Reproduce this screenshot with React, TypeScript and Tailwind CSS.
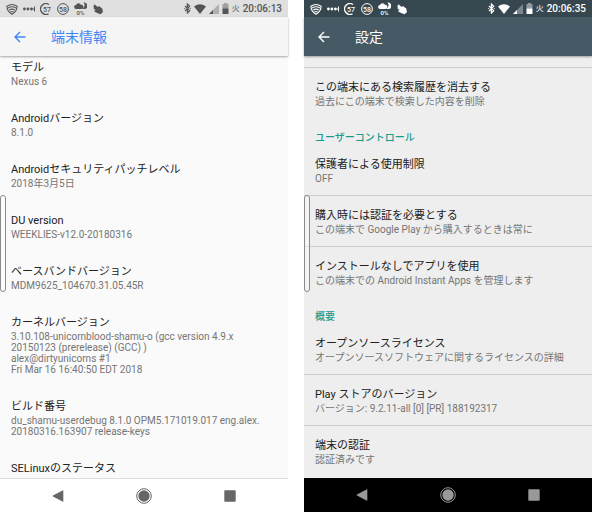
import React, { type ReactNode } from "react";

type Tone = { bar: string; toolbar: string; nav: string };

function WifiShieldIcon() {
  return (
    <svg className="h-3 w-3 shrink-0" viewBox="0 0 12 12" fill="none" stroke="currentColor" strokeWidth="1.1" aria-hidden="true">
      <path d="M.9 3.3Q6-.3 11.1 3.3C11.1 7 8.8 9.6 6 11.3 3.2 9.6.9 7 .9 3.3Z" />
      <path d="M2.2 5Q6 2.4 9.8 5M3.2 7.1Q6 5.2 8.8 7.1M4.4 9Q6 7.9 7.6 9" />
    </svg>
  );
}

function DotsIcon() {
  return (
    <svg className="h-3 w-3 shrink-0" viewBox="0 0 12 12" fill="currentColor" aria-hidden="true">
      <circle cx="1.4" cy="6" r="1.4" />
      <circle cx="4.9" cy="6" r="1.4" />
      <circle cx="8.4" cy="6" r="1.4" />
      <path d="M9.500 5.500h1.500v1H9.500zM11 3.500h1v5h-1z" />
    </svg>
  );
}

function GaugeIcon({ value, partial }: { value: string; partial?: boolean }) {
  return (
    <svg className="h-3 w-3 shrink-0" viewBox="0 0 12 12" aria-hidden="true">
      {partial ? (
        <path d="M9 1.500A5.400 5.400 0 1 0 8.500 10.800" fill="none" stroke="currentColor" strokeWidth="1.300" />
      ) : (
        <circle cx="6" cy="6" r="5.400" fill="none" stroke="currentColor" strokeWidth="1" />
      )}
      <text x={partial ? "7" : "6"} y="8.600" textAnchor="middle" fontSize="7" fontWeight="500" fill="currentColor" fontFamily="Roboto, sans-serif">
        {value}
      </text>
    </svg>
  );
}

function WeatherIcon() {
  return (
    <svg className="h-[14px] w-[13px] shrink-0" viewBox="0 0 13 14" fill="currentColor" aria-hidden="true">
      <path d="M2.200 7A2 2 0 0 1 2 3 2.700 2.700 0 0 1 7 2.800a2.100 2.100 0 0 1 .6 4.200Z" />
      <path d="M9.300.8A3.200 3.200 0 1 1 8.400 6.400 3.200 3.200 0 0 0 10.500 3.600 2.600 2.600 0 0 0 9.300.8Z" />
      <text x="6.500" y="13" textAnchor="middle" fontSize="6" fontWeight="500" fontFamily="Roboto, sans-serif">
        0%
      </text>
    </svg>
  );
}

function HandIcon() {
  return (
    <svg className="h-3 w-3 shrink-0" viewBox="0 0 12 12" fill="currentColor" aria-hidden="true">
      <path d="M2.400 1.200 5.800 4 6.900 3l3.300 2.600L11 9 8.600 11.200 5.600 10.300 2 8.300l.4-.9 1.300.2L1.300 5.100l.7-.7L1.200 2.900l.8-.4Z" />
    </svg>
  );
}

function BluetoothIcon() {
  return (
    <svg className="h-[11px] w-[7px] shrink-0" viewBox="0 0 7 11" fill="none" stroke="currentColor" strokeWidth="1.200" aria-hidden="true">
      <path d="M1 3 5.700 7.700 3.400 10V1l2.300 2.300L1 8" />
      <path d="M.3 5.500h.9M5.800 5.500h.9" />
    </svg>
  );
}

function WifiIcon() {
  return (
    <svg className="h-[10px] w-3 shrink-0" viewBox="0 0 12 10" fill="currentColor" aria-hidden="true">
      <path d="M0 2.500Q6-2 12 2.500L6 10Z" />
    </svg>
  );
}

function SignalIcon() {
  return (
    <svg className="h-[10px] w-[10px] shrink-0" viewBox="0 0 10 10" fill="currentColor" aria-hidden="true">
      <path d="M10 0v10H0Z" opacity=".35" />
      <path d="M4 6v4H0Z" />
    </svg>
  );
}

function BatteryIcon() {
  return (
    <svg className="h-[11px] w-[7px] shrink-0" viewBox="0 0 7 11" fill="currentColor" aria-hidden="true">
      <path d="M2 0h3v1h1.500v4.500H.5V1H2Z" opacity=".45" />
      <path d="M.5 5.500h6V11h-6Z" />
      <path d="M1.500 4.500h1v2h-1zM4.500 4.500h1v2h-1z" opacity=".6" />
    </svg>
  );
}

function StatusBar({ time, tone }: { time: string; tone: Tone }) {
  return (
    <div className={`flex h-[17px] shrink-0 items-center justify-between px-[6px] ${tone.bar}`}>
      <div className="flex items-center gap-[5px]">
        <WifiShieldIcon />
        <DotsIcon />
        <GaugeIcon value="57" partial />
        <GaugeIcon value="58" />
        <WeatherIcon />
        <HandIcon />
      </div>
      <div className="flex items-center gap-[3px]">
        <BluetoothIcon />
        <WifiIcon />
        <SignalIcon />
        <BatteryIcon />
        <span className="text-[8px] leading-4">火</span>
        <time className="text-[10px] leading-4 font-medium">{time}</time>
      </div>
    </div>
  );
}

function Toolbar({ title, tone }: { title: string; tone: Tone }) {
  return (
    <header className={`relative z-10 flex h-[39px] shrink-0 items-center gap-6 px-3 shadow-[0_1px_2px_rgba(0,0,0,0.35)] ${tone.toolbar}`}>
      <button type="button" aria-label="戻る" className="flex w-[15px] justify-center">
        <svg className="h-3 w-3" viewBox="0 0 12 12" fill="none" stroke="currentColor" strokeWidth="1.400" aria-hidden="true">
          <path d="M11.500 6H1.200M6 1 1 6l5 5" />
        </svg>
      </button>
      <h1 className="text-[14px] leading-5">{title}</h1>
    </header>
  );
}

function NavBar({ tone }: { tone: Tone }) {
  return (
    <nav className={`grid h-[34px] shrink-0 grid-cols-3 px-[5%] ${tone.nav}`}>
      <button type="button" aria-label="戻る" className="flex items-center justify-center">
        <svg className="h-3 w-3" viewBox="0 0 12 12" fill="currentColor" aria-hidden="true">
          <path d="M11.300.8v10.400q0 .8-.8.4L1 6.600Q.2 6 1 5.400L10.500.4q.8-.4.8.4Z" />
        </svg>
      </button>
      <button type="button" aria-label="ホーム" className="flex items-center justify-center">
        <svg className="h-4 w-4" viewBox="0 0 16 16" fill="currentColor" aria-hidden="true">
          <circle cx="8" cy="8" r="7.300" fill="none" stroke="currentColor" strokeWidth="1" />
          <circle cx="8" cy="8" r="5.700" />
        </svg>
      </button>
      <button type="button" aria-label="履歴" className="flex items-center justify-center">
        <svg className="h-3 w-3" viewBox="0 0 12 12" fill="currentColor" aria-hidden="true">
          <rect x=".3" y=".3" width="11.400" height="11.400" rx=".8" />
        </svg>
      </button>
    </nav>
  );
}

function EdgeHandle() {
  return <div className="absolute top-[195px] left-0 h-[97px] w-[6px] rounded-[3px] border border-[#8a8a8a] bg-white/40" />;
}

function Entry({ title, lines }: { title: string; lines: string[] }) {
  return (
    <div className="flex flex-col gap-px">
      <h2 className="text-[11px] leading-[14px] text-[#212121]">{title}</h2>
      {lines.length > 0 && (
        <p className="text-[10px] leading-[11px] text-[#757575]">
          {lines.map((line) => (
            <span key={line} className="block whitespace-nowrap">
              {line}
            </span>
          ))}
        </p>
      )}
    </div>
  );
}

function Row({ title, summary, divided }: { title: string; summary: string; divided?: boolean }) {
  return (
    <div className={`px-[11px] pt-[13px] pb-[11px] ${divided ? "border-t border-[#cfcfcf]" : ""}`}>
      <Entry title={title} lines={[summary]} />
    </div>
  );
}

function SectionTitle({ children }: { children: ReactNode }) {
  return <h2 className="px-[11px] pt-3 text-[10px] leading-[15px] font-medium text-[#179c8e]">{children}</h2>;
}

function Phone({ time, title, tone, surface, children }: { time: string; title: string; tone: Tone; surface: string; children: ReactNode }) {
  return (
    <section className={`relative flex min-w-0 flex-1 flex-col ${surface}`}>
      <StatusBar time={time} tone={tone} />
      <Toolbar title={title} tone={tone} />
      <main className="min-h-0 flex-1 overflow-hidden">{children}</main>
      <NavBar tone={tone} />
      <EdgeHandle />
    </section>
  );
}

const light: Tone = {
  bar: "bg-[#e0e0e0] text-[#555555]",
  toolbar: "bg-[#f5f5f5] text-[#4285f4]",
  nav: "border-t border-[#dddddd] bg-white text-[#666666]",
};

const dark: Tone = {
  bar: "bg-[#37474f] text-white",
  toolbar: "bg-[#455a64] text-white",
  nav: "bg-black text-[#999999]",
};

const deviceInfo = [
  { title: "モデル", lines: ["Nexus 6"] },
  { title: "Androidバージョン", lines: ["8.1.0"] },
  { title: "Androidセキュリティパッチレベル", lines: ["2018年3月5日"] },
  { title: "DU version", lines: ["WEEKLIES-v12.0-20180316"] },
  { title: "ベースバンドバージョン", lines: ["MDM9625_104670.31.05.45R"] },
  {
    title: "カーネルバージョン",
    lines: [
      "3.10.108-unicornblood-shamu-o (gcc version 4.9.x",
      "20150123 (prerelease) (GCC) )",
      "alex@dirtyunicorns #1",
      "Fri Mar 16 16:40:50 EDT 2018",
    ],
  },
  { title: "ビルド番号", lines: ["du_shamu-userdebug 8.1.0 OPM5.171019.017 eng.alex.", "20180316.163907 release-keys"] },
  { title: "SELinuxのステータス", lines: [] },
];

export default function App() {
  return (
    <div lang="ja" className="flex h-screen gap-4 bg-white font-[Roboto,'Noto_Sans_CJK_JP',sans-serif]">
      <Phone time="20:06:13" title="端末情報" tone={light} surface="bg-[#fafafa]">
        <div className="flex flex-col gap-[25px] px-[11px] pt-[5px]">
          {deviceInfo.map((item) => (
            <Entry key={item.title} {...item} />
          ))}
        </div>
      </Phone>
      <Phone time="20:06:35" title="設定" tone={dark} surface="bg-[#eeeeee]">
        <div className="pt-[11px]">
          <Row divided title="この端末にある検索履歴を消去する" summary="過去にこの端末で検索した内容を削除" />
          <SectionTitle>ユーザーコントロール</SectionTitle>
          <Row title="保護者による使用制限" summary="OFF" />
          <Row divided title="購入時には認証を必要とする" summary="この端末で Google Play から購入するときは常に" />
          <Row divided title="インストールなしでアプリを使用" summary="この端末での Android Instant Apps を管理します" />
          <SectionTitle>概要</SectionTitle>
          <Row title="オープンソースライセンス" summary="オープンソースソフトウェアに関するライセンスの詳細" />
          <Row divided title="Play ストアのバージョン" summary="バージョン: 9.2.11-all [0] [PR] 188192317" />
          <Row divided title="端末の認証" summary="認証済みです" />
        </div>
      </Phone>
    </div>
  );
}
